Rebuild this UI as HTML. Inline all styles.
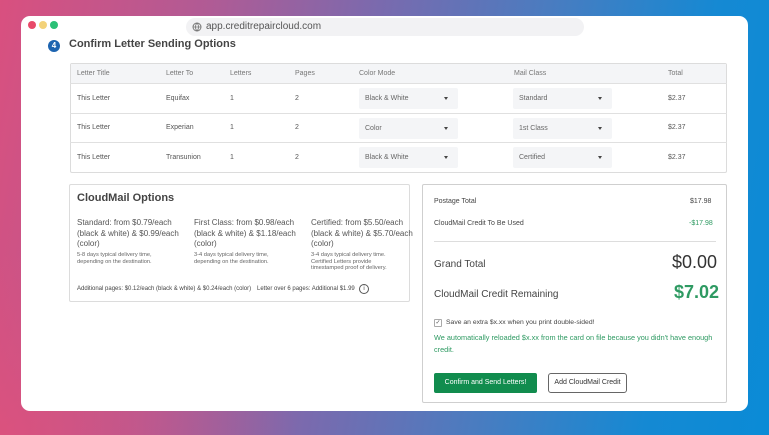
<!DOCTYPE html>
<html><head><style>
*{margin:0;padding:0;box-sizing:border-box}
body{width:769px;height:435px;overflow:hidden;position:relative;font-family:"Liberation Sans",sans-serif;color:#444;
background:linear-gradient(100deg,#d9507f 0%,#b05b95 25%,#7a6aae 45%,#4a7cc0 65%,#1589d3 85%,#0a8bd6 100%)}
.bl{position:absolute;left:0;top:250px;width:300px;height:185px;background:radial-gradient(ellipse at 0% 100%,rgba(230,80,120,.6),rgba(230,80,120,0) 70%)}
.win{position:absolute;left:21px;top:16px;width:727px;height:395px;background:#fff;border-radius:9px}
.d{position:absolute;top:5px;width:8px;height:8px;border-radius:50%}
.url{position:absolute;left:186px;top:18px;width:398px;height:18px;background:#f2f2f4;border-radius:9px;font-size:10px;color:#555;line-height:18px;padding-left:20px}
.a{position:absolute}
.t{font-size:7px;color:#555}
.sel{position:absolute;height:21px;background:#f4f5f7;border-radius:2px;font-size:7px;color:#666;line-height:21px;padding-left:6px}
.sel:after{content:"";position:absolute;right:10px;top:9px;border-left:2.5px solid transparent;border-right:2.5px solid transparent;border-top:3px solid #444}
.row{position:absolute;left:70px;width:657px;border-top:1px solid #e0e0e0}
</style></head><body>
<div class="bl"></div>
<div class="win">
<div class="d" style="left:7px;top:5px;background:#e84a6a"></div>
<div class="d" style="left:18px;top:5px;background:#f3d27a"></div>
<div class="d" style="left:29px;top:5px;background:#2bc076"></div>
</div>
<div class="url"><svg style="position:absolute;left:6px;top:4px" width="10" height="10" viewBox="0 0 10 10"><circle cx="5" cy="5" r="4" fill="none" stroke="#777" stroke-width="1"/><path d="M1 5h8M5 1c-2 2-2 6 0 8M5 1c2 2 2 6 0 8" fill="none" stroke="#777" stroke-width=".8"/></svg>app.creditrepaircloud.com</div>
<div class="a" style="left:48px;top:40px;width:12px;height:12px;border-radius:50%;background:#1d64b0;color:#fff;font-size:8px;text-align:center;line-height:12px;font-weight:bold">4</div>
<div class="a" style="left:69px;top:38px;font-size:11px;font-weight:bold;color:#444">Confirm Letter Sending Options</div>
<div class="a" style="left:70px;top:63px;width:657px;height:110px;border:1px solid #dcdcdc;border-radius:2px"></div>
<div class="a" style="left:71px;top:64px;width:655px;height:19px;background:#f4f5f7"></div>
<div class="row" style="top:83px"></div><div class="row" style="top:113px"></div><div class="row" style="top:142px"></div>
<div class="a t" style="left:77px;top:70px;color:#777">Letter Title</div>
<div class="a t" style="left:166px;top:70px;color:#777">Letter To</div>
<div class="a t" style="left:230px;top:70px;color:#777">Letters</div>
<div class="a t" style="left:295px;top:70px;color:#777">Pages</div>
<div class="a t" style="left:359px;top:70px;color:#777">Color Mode</div>
<div class="a t" style="left:514px;top:70px;color:#777">Mail Class</div>
<div class="a t" style="left:668px;top:70px;color:#777">Total</div>

<div class="a t" style="left:77px;top:95px">This Letter</div><div class="a t" style="left:166px;top:95px">Equifax</div><div class="a t" style="left:230px;top:95px">1</div><div class="a t" style="left:295px;top:95px">2</div><div class="sel" style="left:359px;top:88px;width:99px">Black &amp; White</div><div class="sel" style="left:513px;top:88px;width:99px">Standard</div><div class="a t" style="left:668px;top:95px">$2.37</div>
<div class="a t" style="left:77px;top:124px">This Letter</div><div class="a t" style="left:166px;top:124px">Experian</div><div class="a t" style="left:230px;top:124px">1</div><div class="a t" style="left:295px;top:124px">2</div><div class="sel" style="left:359px;top:118px;width:99px">Color</div><div class="sel" style="left:513px;top:118px;width:99px">1st Class</div><div class="a t" style="left:668px;top:124px">$2.37</div>
<div class="a t" style="left:77px;top:154px">This Letter</div><div class="a t" style="left:166px;top:154px">Transunion</div><div class="a t" style="left:230px;top:154px">1</div><div class="a t" style="left:295px;top:154px">2</div><div class="sel" style="left:359px;top:147px;width:99px">Black &amp; White</div><div class="sel" style="left:513px;top:147px;width:99px">Certified</div><div class="a t" style="left:668px;top:154px">$2.37</div>

<div class="a" style="left:69px;top:184px;width:341px;height:118px;border:1px solid #dcdcdc;border-radius:2px"></div>
<div class="a" style="left:77px;top:192px;font-size:11px;font-weight:bold;color:#444">CloudMail Options</div>
<div class="a" style="left:77px;top:218px;width:110px;font-size:8px;line-height:10.5px;color:#555">Standard: from $0.79/each (black &amp; white) &amp; $0.99/each (color)</div>
<div class="a" style="left:194px;top:218px;width:102px;font-size:8px;line-height:10.5px;color:#555">First Class: from $0.98/each (black &amp; white) &amp; $1.18/each (color)</div>
<div class="a" style="left:311px;top:218px;width:110px;font-size:8px;line-height:10.5px;color:#555">Certified: from $5.50/each (black &amp; white) &amp; $5.70/each (color)</div>
<div class="a" style="left:77px;top:252px;width:85px;font-size:5.7px;line-height:6.5px;color:#666">5-8 days typical delivery time, depending on the destination.</div>
<div class="a" style="left:194px;top:252px;width:85px;font-size:5.7px;line-height:6.5px;color:#666">3-4 days typical delivery time, depending on the destination.</div>
<div class="a" style="left:311px;top:252px;width:80px;font-size:5.7px;line-height:6.5px;color:#666">3-4 days typical delivery time. Certified Letters provide timestamped proof of delivery.</div>
<div class="a" style="left:77px;top:286px;font-size:6px;color:#444;white-space:nowrap">Additional pages: $0.12/each (black &amp; white) &amp; $0.24/each (color)</div>
<div class="a" style="left:257px;top:286px;font-size:6px;color:#444;white-space:nowrap">Letter over 6 pages: Additional $1.99</div>
<div class="a" style="left:359px;top:284px;width:10px;height:10px;border:1px solid #555;border-radius:50%;font-size:6px;text-align:center;line-height:8px">i</div>

<div class="a" style="left:422px;top:184px;width:305px;height:219px;border:1px solid #cfcfcf;border-radius:2px"></div>
<div class="a" style="left:434px;top:198px;font-size:7px;color:#444">Postage Total</div>
<div class="a" style="left:690px;top:198px;font-size:7px;color:#444">$17.98</div>
<div class="a" style="left:434px;top:220px;font-size:7px;color:#444">CloudMail Credit To Be Used</div>
<div class="a" style="left:689px;top:220px;font-size:7px;color:#2e9a62">-$17.98</div>
<div class="a" style="left:434px;top:241px;width:282px;border-top:1px solid #ddd"></div>
<div class="a" style="left:434px;top:259px;font-size:10px;color:#444">Grand Total</div>
<div class="a" style="left:672px;top:252px;font-size:18px;color:#333">$0.00</div>
<div class="a" style="left:434px;top:289px;font-size:10px;color:#444">CloudMail Credit Remaining</div>
<div class="a" style="left:674px;top:282px;font-size:18px;font-weight:bold;color:#2e9a62">$7.02</div>
<div class="a" style="left:434px;top:319px;width:8px;height:8px;border:1px solid #aaa;border-radius:1px;font-size:6px;line-height:6px;text-align:center;color:#555">✓</div>
<div class="a" style="left:446px;top:319px;font-size:6.8px;color:#444;white-space:nowrap">Save an extra $x.xx when you print double-sided!</div>
<div class="a" style="left:434px;top:332px;width:285px;font-size:7.3px;line-height:12px;color:#2e9a62">We automatically reloaded $x.xx from the card on file because you didn't have enough credit.</div>
<div class="a" style="left:434px;top:373px;width:103px;height:20px;background:#118c4e;border-radius:2px;color:#fff;font-size:7px;text-align:center;line-height:20px">Confirm and Send Letters!</div>
<div class="a" style="left:548px;top:373px;width:79px;height:20px;border:1.5px solid #666;border-radius:3px;color:#333;font-size:7px;text-align:center;line-height:17px">Add CloudMail Credit</div>
</body></html>
